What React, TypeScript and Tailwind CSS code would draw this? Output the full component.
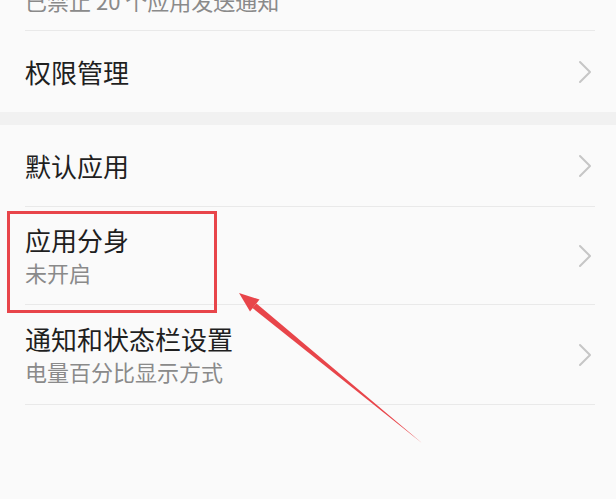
import React from "react";

const Chevron: React.FC = () => (
  <svg width="14" height="24" viewBox="0 0 14 24" fill="none" className="shrink-0">
    <path d="M2 2 L12 12 L2 22" stroke="#c6c6c6" strokeWidth="2" strokeLinecap="round" strokeLinejoin="round" />
  </svg>
);

type RowProps = {
  title: string;
  sub?: string;
  height: string;
  last?: boolean;
};

const Row: React.FC<RowProps> = ({ title, sub, height, last }) => (
  <div className={`mx-[25px] mr-[21px] flex items-center justify-between ${height} ${last ? "" : "border-b border-[#e9e9e9]"}`}>
    <div className="flex flex-col">
      <span className="text-[26px] leading-[33px] text-[#1f1f1f]">{title}</span>
      {sub && <span className="text-[22px] leading-[33px] text-[#8a8a8a]">{sub}</span>}
    </div>
    <div className="mr-[3px]">
      <Chevron />
    </div>
  </div>
);

export default function App() {
  return (
    <div
      className="relative w-[616px] h-[499px] overflow-hidden bg-[#fafafa]"
      style={{ fontFamily: '"Noto Sans CJK SC", "Noto Sans", sans-serif' }}
    >
      {/* cut-off line at the top */}
      <div className="mx-[25px] mr-[21px] h-[31px] border-b border-[#e9e9e9] overflow-hidden">
        <div className="-mt-[16px] text-[22px] leading-[33px] text-[#8a8a8a]">已禁止 20 个应用发送通知</div>
      </div>

      <Row title="权限管理" height="h-[81px]" last />

      <div className="h-[13px] bg-[#f1f1f1]" />

      <Row title="默认应用" height="h-[82px]" />
      <Row title="应用分身" sub="未开启" height="h-[98px]" />
      <Row title="通知和状态栏设置" sub="电量百分比显示方式" height="h-[100px]" />

      {/* annotation: red box */}
      <div className="absolute left-[7px] top-[211px] w-[210px] h-[102px] border-[3px] border-[#e8454a]" />

      {/* annotation: arrow */}
      <svg className="absolute left-0 top-0" width="616" height="499" viewBox="0 0 616 499">
        <polygon points="239,293 259.5,299.5 250,311.5" fill="#e8454a" />
        <polygon points="256.5,303.5 252.5,308 422.5,443.5" fill="#e8454a" />
      </svg>
    </div>
  );
}
